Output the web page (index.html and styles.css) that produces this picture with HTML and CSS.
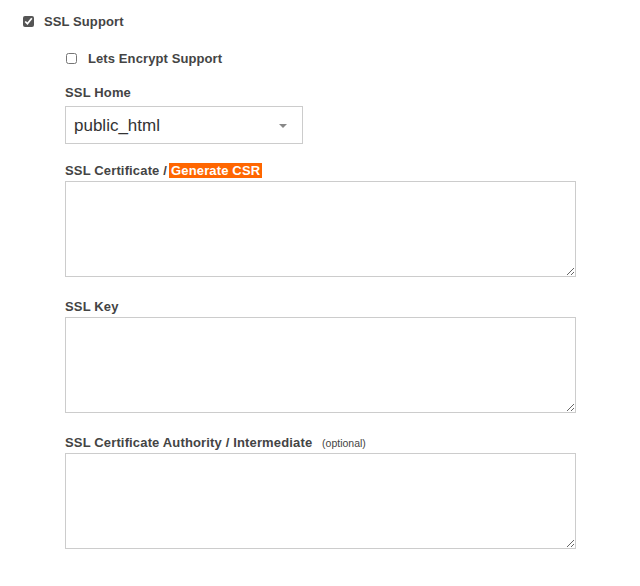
FILE: index.html
```html
<!DOCTYPE html>
<html lang="en">

<head>
    <meta charset="UTF-8">
    <meta name="viewport" content="width=device-width, initial-scale=1.0">
    <title>SSL Settings</title>
    <link rel="stylesheet" href="styles.css">
</head>

<body>

    <div class="container">
        <label class="check main-check">
            <input type="checkbox" checked>
            <span>SSL Support</span>
        </label>

        <div class="ssl-options">
            <label class="check sub-check">
                <input type="checkbox">
                <span>Lets Encrypt Support</span>
            </label>

            <div class="field field-home">
                <label class="field-label">SSL Home</label>
                <div class="select">
                    <span>public_html</span>
                    <span class="arrow"></span>
                </div>
            </div>

            <div class="field field-cert">
                <label class="field-label">SSL Certificate /<a href="#" class="csr">Generate CSR</a></label>
                <textarea></textarea>
            </div>

            <div class="field">
                <label class="field-label">SSL Key</label>
                <textarea></textarea>
            </div>

            <div class="field">
                <label class="field-label">SSL Certificate Authority / Intermediate <small>(optional)</small></label>
                <textarea></textarea>
            </div>
        </div>
    </div>

</body>

</html>
```

FILE: styles.css
```css
body {
    font-family: "Liberation Sans", Arial, sans-serif;
    margin: 0;
    padding: 0;
    background-color: #fff;
    color: #444;
}

.container {
    padding: 13px 0 0 23px;
}

.check {
    display: flex;
    align-items: center;
    font-size: 13px;
    font-weight: bold;
    letter-spacing: 0.1px;
    color: #444;
}

.check input {
    width: 11px;
    height: 11px;
    margin: 0 10px 0 0;
    accent-color: #555;
}

.main-check {
    height: 16px;
}

.ssl-options {
    padding-left: 42px;
}

.sub-check {
    margin-top: 21px;
    height: 16px;
}

.sub-check input {
    margin-left: 1px;
    margin-right: 11px;
}

.field {
    margin-top: 22px;
}

.field-label {
    display: block;
    font-size: 13px;
    font-weight: bold;
    letter-spacing: 0.15px;
    color: #444;
    margin-bottom: 2px;
    line-height: 16px;
}

.field-label small {
    font-size: 10.5px;
    font-weight: normal;
    letter-spacing: 0;
    margin-left: 6px;
}

.csr {
    background-color: #ff6600;
    color: #fff;
    text-decoration: none;
    margin-left: 2px;
    padding: 0 2px;
}

.field-home {
    margin-top: 19px;
}

.field-home .field-label {
    margin-bottom: 5px;
}

.field-cert {
    margin-top: 19px;
}

.select {
    width: 213px;
    height: 35px;
    border: 1px solid #ccc;
    display: flex;
    align-items: center;
    justify-content: space-between;
    padding: 1px 15px 0 8px;
    font-size: 17px;
    color: #333;
}

.arrow {
    width: 0;
    height: 0;
    border-left: 4px solid transparent;
    border-right: 4px solid transparent;
    border-top: 4px solid #888;
}

textarea {
    display: block;
    width: 511px;
    height: 96px;
    box-sizing: border-box;
    border: 1px solid #ccc;
    margin: 0;
}
```
